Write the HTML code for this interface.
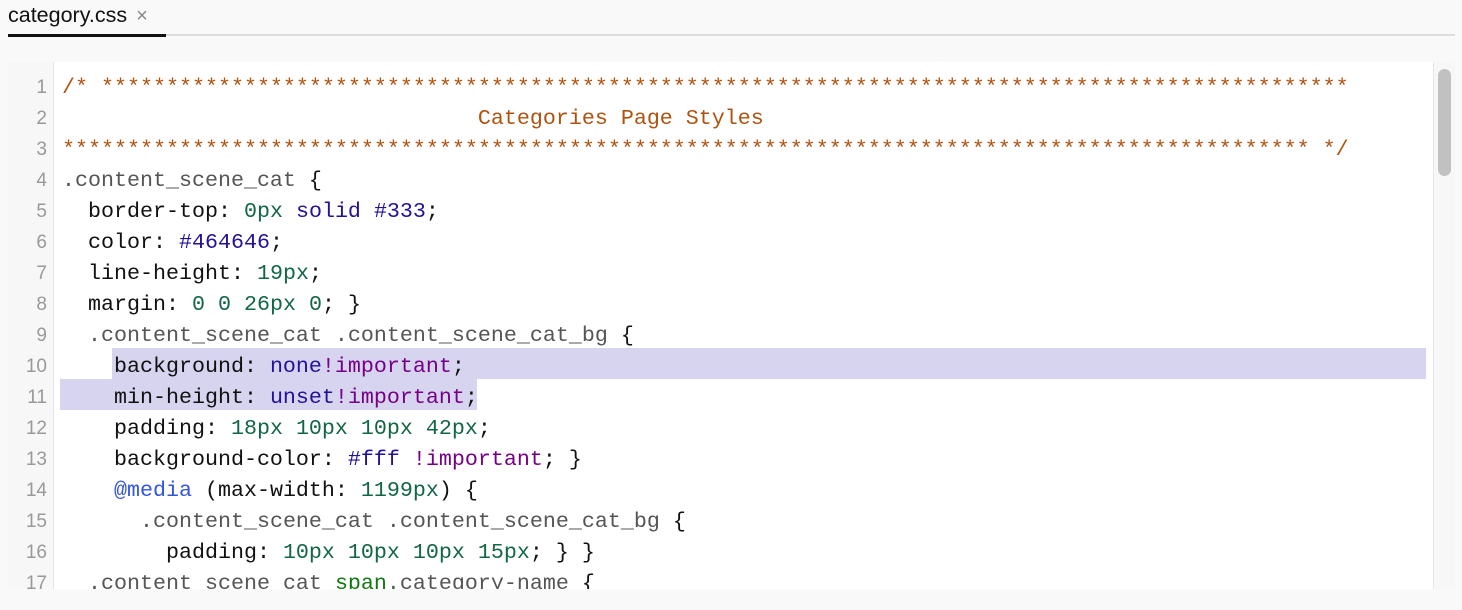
<!DOCTYPE html>
<html><head><meta charset="utf-8"><style>
html,body{margin:0;padding:0;background:#f9f9f9;width:1462px;height:610px;overflow:hidden}
.tab{position:absolute;left:8px;top:3px;font:21.5px "Liberation Sans",sans-serif;color:#111}
.tab .x{color:#888;font-size:20px;margin-left:9px}
.tabline{position:absolute;left:8px;top:34px;width:1447px;height:2px;background:#ddd}
.tabact{position:absolute;left:8px;top:34px;width:158px;height:3px;background:#111}
.ed{position:absolute;left:8px;top:62px;width:1447px;height:527px;background:#fff;overflow:hidden}
.gut{position:absolute;left:0;top:0;width:45px;height:527px;background:#f7f7f7;border-right:1px solid #e4e4e4}
.sb{position:absolute;left:1425px;top:0;width:22px;height:527px;background:#f7f7f7;border-left:1px solid #e6e6e6}
.th{position:absolute;left:4px;top:7px;width:13px;height:107px;background:#c1c1c1;border-radius:7px}
.sel{position:absolute;background:#d7d4ef;height:31px}
pre{margin:0;position:absolute;top:10px;left:0;font:21.67px/31px "Liberation Mono",monospace;color:#111}
.ln{position:absolute;top:10px;left:0;width:39px;text-align:right;font:19px/31px "Liberation Sans",sans-serif;color:#999}
.c{color:#b0520f}.s{color:#555}.n{color:#116644}.k{color:#221199}.i{color:#770088}.m{color:#3355dd}.g{color:#117711}
</style></head><body>
<div class="tab">category.css<span class="x">×</span></div>
<div class="tabline"></div><div class="tabact"></div>
<div class="ed">
<div class="gut"></div>
<div class="sel" style="left:104px;top:286px;width:1314px"></div>
<div class="sel" style="left:52px;top:317px;width:417px"></div>
<div class="ln">1<br>2<br>3<br>4<br>5<br>6<br>7<br>8<br>9<br>10<br>11<br>12<br>13<br>14<br>15<br>16<br>17</div>
<pre style="left:54px"><span class="c">/* ************************************************************************************************
                                Categories Page Styles
************************************************************************************************ */</span>
<span class="s">.content_scene_cat</span> {
  border-top: <span class="n">0px</span> <span class="k">solid</span> <span class="k">#333</span>;
  color: <span class="k">#464646</span>;
  line-height: <span class="n">19px</span>;
  margin: <span class="n">0</span> <span class="n">0</span> <span class="n">26px</span> <span class="n">0</span>; }
  <span class="s">.content_scene_cat .content_scene_cat_bg</span> {
    background: <span class="k">none</span><span class="i">!important</span>;
    min-height: <span class="k">unset</span><span class="i">!important</span>;
    padding: <span class="n">18px</span> <span class="n">10px</span> <span class="n">10px</span> <span class="n">42px</span>;
    background-color: <span class="k">#fff</span> <span class="i">!important</span>; }
    <span class="m">@media</span> (max-width: <span class="n">1199px</span>) {
      <span class="s">.content_scene_cat .content_scene_cat_bg</span> {
        padding: <span class="n">10px</span> <span class="n">10px</span> <span class="n">10px</span> <span class="n">15px</span>; } }
  <span class="s">.content_scene_cat</span> <span class="g">span</span><span class="s">.category-name</span> {</pre>
<div class="sb"><div class="th"></div></div>
</div>
</body></html>
